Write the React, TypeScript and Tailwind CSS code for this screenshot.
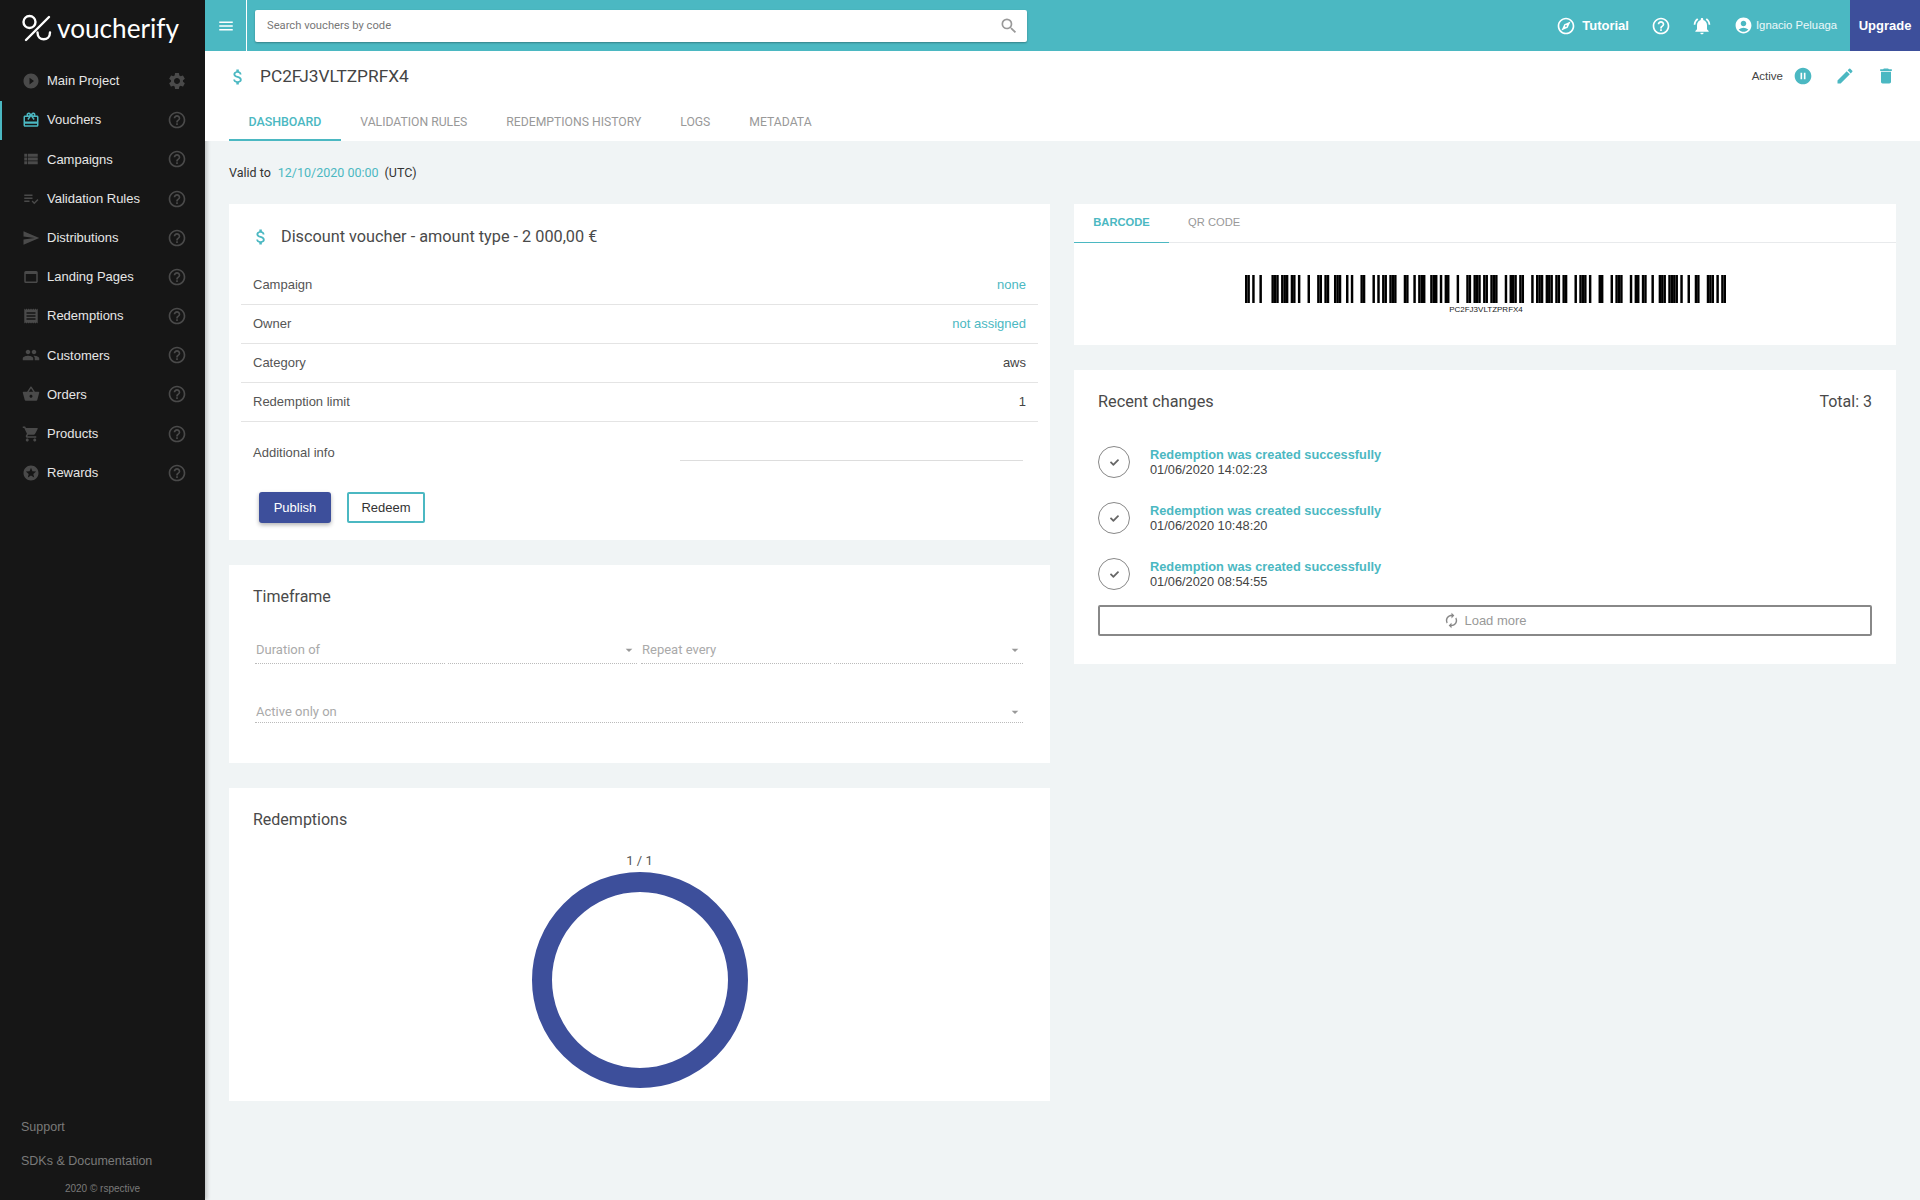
import React from 'react';
import { FaCheck } from 'react-icons/fa';
import {
  MdPlayCircleFilled,
  MdCardGiftcard,
  MdViewList,
  MdPlaylistAddCheck,
  MdSend,
  MdWebAsset,
  MdReceipt,
  MdPeople,
  MdShoppingBasket,
  MdShoppingCart,
  MdStars,
  MdHelpOutline,
  MdNotificationsActive,
  MdAccountCircle,
  MdPauseCircleFilled,
  MdEdit,
  MdDelete,
  MdArrowDropDown,
  MdSettings,
  MdOutlineExplore,
  MdMenu,
  MdSearch,
  MdAttachMoney,
  MdAutorenew,
} from 'react-icons/md';

const navItems = [
  { label: 'Main Project', icon: MdPlayCircleFilled, settings: true },
  { label: 'Vouchers', icon: MdCardGiftcard, active: true },
  { label: 'Campaigns', icon: MdViewList },
  { label: 'Validation Rules', icon: MdPlaylistAddCheck },
  { label: 'Distributions', icon: MdSend },
  { label: 'Landing Pages', icon: MdWebAsset },
  { label: 'Redemptions', icon: MdReceipt },
  { label: 'Customers', icon: MdPeople },
  { label: 'Orders', icon: MdShoppingBasket },
  { label: 'Products', icon: MdShoppingCart },
  { label: 'Rewards', icon: MdStars },
];

const tabs = ['DASHBOARD', 'VALIDATION RULES', 'REDEMPTIONS HISTORY', 'LOGS', 'METADATA'];

const changes = ['01/06/2020 14:02:23', '01/06/2020 10:48:20', '01/06/2020 08:54:55'];

// Code 128 B for PC2FJ3VLTZPRFX4: start, 15 characters, check digit, stop
const barcodeModules = [
  '11010010000',
  '11101110110',
  '10001000110',
  '11001110010',
  '10001100010',
  '10110111000',
  '11001011100',
  '11101011000',
  '10001101110',
  '11011100010',
  '11101100010',
  '11101110110',
  '11000101110',
  '10001100010',
  '11100010110',
  '11001001110',
  '11110100100',
  '1100011101011',
].join('');

const Barcode = () => (
  <svg width="481" height="28" viewBox={`0 0 ${barcodeModules.length} 28`} preserveAspectRatio="none">
    {barcodeModules.split('').map((bit, i) =>
      bit === '1' ? <rect key={i} x={i} y={0} width={1.02} height={28} fill="#000" /> : null
    )}
  </svg>
);

const Row = ({ label, value, link }: { label: string; value: string; link?: boolean }) => (
  <div className="flex h-[39px] items-center justify-between border-b border-[#e4e4e4] px-3">
    <span className="text-[#555]">{label}</span>
    <span className={link ? 'text-[#4bb8c2]' : 'text-[#444]'}>{value}</span>
  </div>
);

const SelectLabel = ({ label }: { label: string }) => (
  <div className="flex flex-1 items-center justify-between pl-[1px]">
    <span className="font-['Roboto',sans-serif] text-[13px] text-[#aaa]">{label}</span>
    <MdArrowDropDown className="text-[#999]" size={16} />
  </div>
);

// the half width selects draw their dotted line in two pieces, one pixel apart
const HalfSelect = ({ label }: { label: string }) => (
  <div className="flex h-[27px] flex-1 flex-col">
    <SelectLabel label={label} />
    <div className="flex h-[2px] gap-[3px]">
      <div className="mt-[1px] flex-1 border-b border-dotted border-[#bbb]" />
      <div className="-mt-[1px] flex-1 border-b border-dotted border-[#bbb]" />
    </div>
  </div>
);

const App = () => {
  return (
    <div className="flex h-[1200px] w-[1920px] overflow-hidden bg-[#f0f4f5] font-['Liberation_Sans',sans-serif] text-[13px]">
      <aside className="flex w-[205px] shrink-0 flex-col bg-[#161616] shadow-[2px_0_4px_rgba(0,0,0,0.2)]">
        <div className="flex h-[51px] items-center pl-[22px] pt-[6px]">
          <svg width="30" height="30" viewBox="0 0 30 30" fill="none" stroke="#fff" strokeWidth="2.4" strokeLinecap="round">
            <circle cx="7.5" cy="8" r="6" />
            <path d="M4 26L27 3" />
            <path d="M15.5 18.5c0 9 12.5 9 12.5 0" />
          </svg>
          <span className="ml-[5px] font-['Lato',sans-serif] text-[26.2px] leading-none text-white">voucherify</span>
        </div>
        <nav className="mt-[10.4px] flex flex-col">
          {navItems.map(({ label, icon: Icon, settings, active }) => (
            <div
              key={label}
              className={`flex h-[39.2px] items-center pl-[22px] pr-[18px] ${active ? 'shadow-[inset_2px_0_0_#4bb8c2]' : ''}`}
            >
              <Icon size={18} className={active ? 'text-[#4bb8c2]' : 'text-[#4a4a4a]'} />
              <span className="ml-[7px] flex-1 text-[13px] text-[#e6e6e6]">{label}</span>
              {settings ? (
                <MdSettings size={20} className="text-[#4a4a4a]" />
              ) : (
                <MdHelpOutline size={20} className="text-[#4a4a4a]" />
              )}
            </div>
          ))}
        </nav>
        <div className="mt-auto flex flex-col pb-[4px] text-[12.5px] leading-[20px] text-[#7a7a7a]">
          <span className="pl-[21px]">Support</span>
          <span className="mt-[14px] pl-[21px]">SDKs &amp; Documentation</span>
          <span className="mt-[11px] text-center text-[10px] leading-[14px]">2020 © rspective</span>
        </div>
      </aside>

      <div className="flex min-w-0 flex-1 flex-col">
        <header className="flex h-[51px] shrink-0 items-center bg-[#4bb8c2]">
          <div className="flex h-full w-[42px] items-center justify-center border-r border-white">
            <MdMenu size={18} className="text-white" />
          </div>
          <div className="ml-[8px] flex h-[32px] w-[772px] items-center justify-between rounded-[2px] bg-white pl-[12px] pr-[8px] shadow-[0_1px_2px_rgba(0,0,0,0.3)]">
            <span className="pt-[1px] font-['Roboto',sans-serif] text-[11.2px] text-[#777]">Search vouchers by code</span>
            <MdSearch size={20} className="text-[#999]" />
          </div>
          <div className="ml-auto flex h-full items-center text-white">
            <MdOutlineExplore size={20} />
            <span className="ml-[6px] text-[13px] font-bold">Tutorial</span>
            <MdHelpOutline size={20} className="ml-[22px]" />
            <MdNotificationsActive size={20} className="ml-[21px]" />
            <MdAccountCircle size={19} className="ml-[22px]" />
            <span className="ml-[3px] text-[11.3px] text-white/90">Ignacio Peluaga</span>
            <div className="ml-[13px] flex h-full w-[70px] items-center justify-center bg-[#3d4f9b] text-[13px] font-bold">
              Upgrade
            </div>
          </div>
        </header>

        <div className="h-[90px] shrink-0 bg-white font-['Roboto',sans-serif]">
          <div className="flex h-[52px] items-center pl-[23px] pr-[24px]">
            <MdAttachMoney size={20} className="text-[#4bb8c2]" />
            <span className="ml-[12px] text-[17.3px] text-[#444]">PC2FJ3VLTZPRFX4</span>
            <div className="ml-auto -mt-[2px] flex items-center">
              <span className="mt-[2px] font-['Liberation_Sans',sans-serif] text-[11.5px] text-[#444]">Active</span>
              <MdPauseCircleFilled size={20} className="ml-[10px] text-[#4bb8c2]" />
              <MdEdit size={20} className="ml-[22px] text-[#4bb8c2]" />
              <MdDelete size={20} className="ml-[21px] text-[#4bb8c2]" />
            </div>
          </div>
          <div className="ml-[24px] flex h-[38px] text-[12.2px] text-[#999]">
            {tabs.map((tab, i) => (
              <div
                key={tab}
                className={`flex items-center px-[19.5px] ${i === 0 ? 'border-b-2 border-[#4bb8c2] pt-[2px] text-[12.4px] font-medium text-[#4bb8c2]' : ''}`}
              >
                {tab}
              </div>
            ))}
          </div>
        </div>

        <main className="flex-1 pl-[24px] pr-[24px]">
          <div className="flex h-[63px] items-center pt-[2px] font-['Roboto',sans-serif] text-[12.5px] text-[#333]">
            Valid to <span className="ml-[7px] text-[#4bb8c2]">12/10/2020 00:00</span>
            <span className="ml-[6px]">(UTC)</span>
          </div>
          <div className="flex gap-[24px]">
            <div className="flex w-[821px] flex-col gap-[25px]">
              <section className="h-[336px] bg-white px-[12px]">
                <div className="flex h-[62px] items-center pl-[10px] pt-[4px]">
                  <MdAttachMoney size={20} className="text-[#4bb8c2]" />
                  <span className="ml-[10px] font-['Roboto',sans-serif] text-[16.25px] text-[#4a4a4a]">
                    Discount voucher - amount type - 2 000,00 €
                  </span>
                </div>
                <Row label="Campaign" value="none" link />
                <Row label="Owner" value="not assigned" link />
                <Row label="Category" value="aws" />
                <Row label="Redemption limit" value="1" />
                <div className="flex h-[64px] justify-between px-3 text-[#555]">
                  <span className="mb-[2px] self-center">Additional info</span>
                  <div className="mr-[3px] mt-[38px] h-px w-[343px] self-start bg-[#ddd]" />
                </div>
                <div className="mt-[6px] flex gap-[16px] pl-[18px]">
                  <button className="h-[31px] w-[72px] rounded-[3px] bg-[#3d4f9b] text-white shadow-[0_2px_4px_rgba(0,0,0,0.3)]">Publish</button>
                  <button className="h-[31px] w-[78px] rounded-[2px] border-2 border-[#4bb8c2] text-[#333]">Redeem</button>
                </div>
              </section>

              <section className="h-[198px] bg-white px-[24px] pt-[22px]">
                <h2 className="font-['Roboto',sans-serif] text-[16px] leading-[19px] text-[#4a4a4a]">Timeframe</h2>
                <div className="ml-[2px] mr-[3px]">
                  <div className="mt-[31px] flex gap-[4px]">
                    <HalfSelect label="Duration of" />
                    <HalfSelect label="Repeat every" />
                  </div>
                  <div className="mt-[37px] flex h-[22px] flex-col border-b border-dotted border-[#bbb] pt-[1px]">
                    <SelectLabel label="Active only on" />
                  </div>
                </div>
              </section>

              <section className="flex h-[313px] flex-col items-center bg-white pt-[22px]">
                <h2 className="self-start pl-[24px] font-['Roboto',sans-serif] text-[16px] leading-[19px] text-[#4a4a4a]">Redemptions</h2>
                <span className="mt-[25px] font-['Roboto',sans-serif] text-[13px] leading-[14px] text-[#555]">1 / 1</span>
                <svg width="216" height="216" viewBox="0 0 216 216" className="mt-[4px]">
                  <circle cx="108" cy="108" r="98" fill="none" stroke="#3d4f9b" strokeWidth="20" />
                </svg>
              </section>
            </div>

            <div className="flex w-[822px] flex-col gap-[25px]">
              <section className="h-[141px] bg-white">
                <div className="flex h-[39px] border-b border-[#e8eaec] text-[11.2px] text-[#999]">
                  <div className="-mb-px flex w-[95px] items-center justify-center border-b border-[#4bb8c2] pb-[2px] font-bold text-[#4bb8c2]">BARCODE</div>
                  <div className="flex items-center pb-[2px] pl-[19px]">QR CODE</div>
                </div>
                <div className="flex flex-col items-center pt-[32px]">
                  <Barcode />
                  <span className="mt-[1px] pl-[2px] text-[8px] leading-[12px] text-[#222]">PC2FJ3VLTZPRFX4</span>
                </div>
              </section>

              <section className="h-[294px] bg-white px-[24px]">
                <div className="flex h-[63px] items-center justify-between pt-[1px] font-['Roboto',sans-serif] text-[#4a4a4a]">
                  <span className="text-[16.3px]">Recent changes</span>
                  <span className="text-[16px]">Total: 3</span>
                </div>
                <div className="mt-[13px] flex flex-col gap-[24px]">
                  {changes.map(date => (
                    <div key={date} className="flex h-[32px] items-center">
                      <div className="flex h-[32px] w-[32px] items-center justify-center rounded-full border border-[#888]">
                        <FaCheck size={9} className="text-[#666]" />
                      </div>
                      <div className="ml-[20px] text-[12.8px] leading-[15px]">
                        <div className="font-bold text-[#4bb8c2]">Redemption was created successfully</div>
                        <div className="text-[#444]">{date}</div>
                      </div>
                    </div>
                  ))}
                </div>
                <button className="mt-[15px] flex h-[31px] w-full items-center justify-center rounded-[2px] border-2 border-[#888] text-[#999]">
                  <MdAutorenew size={17} className="mr-[4px] text-[#888]" />
                  Load more
                </button>
              </section>
            </div>
          </div>
        </main>
      </div>
    </div>
  );
};

export default App;
